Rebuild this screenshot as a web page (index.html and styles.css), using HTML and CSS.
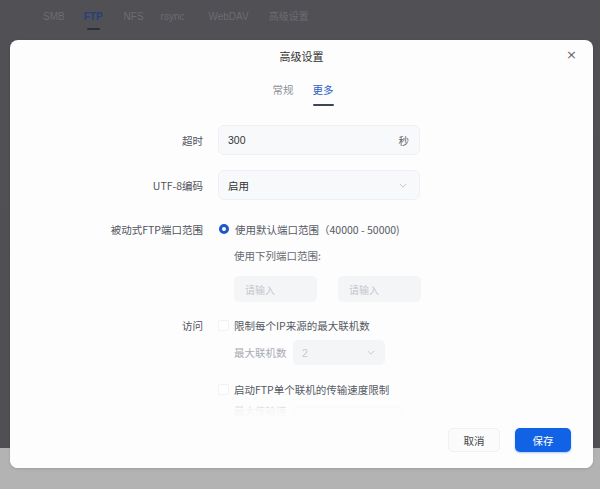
FILE: index.html
```html
<!DOCTYPE html>
<html lang="zh-CN">
<head>
<meta charset="utf-8">
<title>高级设置</title>
<link rel="stylesheet" href="styles.css">
</head>
<body>
<div class="page">
  <nav class="topnav">
    <span class="nav-item n1">SMB</span>
    <span class="nav-item n2 active">FTP</span>
    <span class="nav-item n3">NFS</span>
    <span class="nav-item n4">rsync</span>
    <span class="nav-item n5">WebDAV</span>
    <span class="nav-item n6">高级设置</span>
  </nav>
</div>

<div class="modal">
  <div class="modal-header">
    <span class="modal-title">高级设置</span>
    <span class="close">×</span>
  </div>
  <div class="tabs">
    <span class="tab">常规</span>
    <span class="tab active">更多</span>
  </div>

  <div class="modal-body">
    <div class="row row-input">
      <label class="label">超时</label>
      <div class="field">
        <span class="value">300</span>
        <span class="suffix">秒</span>
      </div>
    </div>

    <div class="row row-select">
      <label class="label">UTF-8编码</label>
      <div class="field">
        <span class="value">启用</span>
        <svg class="chev" viewBox="0 0 10 6" width="8" height="5"><path d="M1 1l4 4 4-4" fill="none" stroke="#b8bcc4" stroke-width="1.1"/></svg>
      </div>
    </div>

    <div class="row row-radio">
      <label class="label">被动式FTP端口范围</label>
      <div class="radio-line">
        <span class="radio"></span>
        <span class="text">使用默认端口范围（40000 - 50000)</span>
      </div>
    </div>

    <div class="sub-line sub-text">使用下列端口范围:</div>

    <div class="port-row">
      <div class="port">请输入</div>
      <div class="port">请输入</div>
    </div>

    <div class="row row-check">
      <label class="label">访问</label>
      <div class="check-line">
        <span class="checkbox"></span>
        <span class="text">限制每个IP来源的最大联机数</span>
      </div>
    </div>

    <div class="limit-row">
      <span class="limit-label">最大联机数</span>
      <div class="limit-select">
        <span>2</span>
        <svg class="chev" viewBox="0 0 10 6" width="8" height="5"><path d="M1 1l4 4 4-4" fill="none" stroke="#c4c7cc" stroke-width="1.1"/></svg>
      </div>
    </div>

    <div class="row row-check2">
      <span class="label"></span>
      <div class="check-line">
        <span class="checkbox"></span>
        <span class="text">启动FTP单个联机的传输速度限制</span>
      </div>
    </div>

    <div class="limit-row faded">
      <span class="limit-label">最大传输速度</span>
      <div class="limit-select wide">
        <span></span>
      </div>
    </div>
  </div>

  <div class="modal-footer">
    <button class="btn btn-cancel">取消</button>
    <button class="btn btn-save">保存</button>
  </div>
</div>
</body>
</html>
```

FILE: styles.css
```css
* { box-sizing: border-box; }

html, body {
  margin: 0;
  padding: 0;
  width: 600px;
  height: 489px;
  overflow: hidden;
}

body {
  font-family: "Noto Sans CJK SC", "Noto Sans", sans-serif;
  background: linear-gradient(to bottom, #505055 0, #4f4f54 448px, #b3b3b4 448px, #b3b3b4 100%);
  position: relative;
}

.page { height: 489px; }

.topnav {
  display: flex;
  align-items: flex-start;
  height: 40px;
  padding: 10px 0 0 43px;
}

.nav-item {
  font-size: 10px;
  color: #6c6c72;
  line-height: 14px;
  padding-bottom: 6px;
  position: relative;
  font-family: "Liberation Sans", "Noto Sans CJK SC", sans-serif;
}
.n1 { margin-right: 19px; }
.n2 { margin-right: 21px; }
.n3 { margin-right: 17px; }
.n4 { margin-right: 24px; }
.n5 { margin-right: 20px; }
.nav-item.active {
  color: #24417a;
  font-weight: bold;
}
.nav-item.active::after {
  content: "";
  position: absolute;
  left: 3px;
  right: 3px;
  bottom: 0;
  height: 2px;
  background: #2b2f3a;
  border-radius: 1px;
}

.modal {
  position: absolute;
  left: 10px;
  top: 40px;
  width: 583px;
  height: 428px;
  background: #fdfdfe;
  border-radius: 8px;
  overflow: hidden;
  box-shadow: 0 1px 3px rgba(0,0,0,0.12);
}

.modal-header {
  height: 32px;
  display: flex;
  align-items: center;
  justify-content: center;
  position: relative;
}
.modal-title {
  font-size: 11px;
  color: #333;
}
.close {
  position: absolute;
  right: 16px;
  top: 8px;
  font-size: 13px;
  color: #666;
  line-height: 14px;
  font-family: "DejaVu Sans", sans-serif;
}

.tabs {
  display: flex;
  justify-content: center;
  gap: 19px;
  padding-left: 3px;
  height: 44px;
  padding-top: 11px;
}
.tab {
  font-size: 10.5px;
  color: #8c9098;
  line-height: 14px;
  height: 23px;
  position: relative;
}
.tab.active { color: #2d63c6; }
.tab.active::after {
  content: "";
  position: absolute;
  left: 0;
  right: 0;
  bottom: 0;
  height: 2px;
  background: #3c4656;
  border-radius: 1px;
}

.modal-body {
  padding-top: 9px;
  font-size: 10.5px;
  color: #444;
}

.row {
  display: flex;
  align-items: center;
}
.label {
  width: 193px;
  text-align: right;
  color: #50545c;
  font-size: 10.5px;
  flex: none;
}

.field {
  margin-left: 15px;
  width: 202px;
  height: 30px;
  background: #f8f9fb;
  border: 1px solid #eef0f3;
  border-radius: 6px;
  display: flex;
  align-items: center;
  justify-content: space-between;
  padding: 0 10px 0 9px;
}
.value { color: #333; font-size: 10.5px; font-family: "Liberation Sans", "Noto Sans CJK SC", sans-serif; }
.suffix { color: #666; font-size: 10.5px; }
.chev { display: block; margin-right: 2px; }

.row-select { margin-top: 15px; }

.row-radio { margin-top: 21px; height: 16px; }
.radio-line, .check-line {
  margin-left: 16px;
  display: flex;
  align-items: center;
}
.radio {
  width: 10px;
  height: 10px;
  border-radius: 50%;
  border: 3px solid #1c58c8;
  background: #fff;
  margin-right: 6px;
}
.text { color: #555a63; }

.sub-line {
  margin-left: 224px;
  margin-top: 11px;
  color: #666a72;
  height: 16px;
  line-height: 16px;
}

.port-row {
  display: flex;
  gap: 21px;
  margin-left: 224px;
  margin-top: 12px;
}
.port {
  width: 83px;
  height: 26px;
  background: #f4f5f7;
  border-radius: 5px;
  color: #c3c6cb;
  font-size: 10px;
  display: flex;
  align-items: center;
  padding-left: 11px;
}

.row-check { margin-top: 15px; height: 16px; }
.checkbox {
  width: 11px;
  height: 11px;
  border: 1px solid #f1f2f4;
  border-radius: 2px;
  margin-right: 5px;
  background: #fff;
}
.check-line { margin-left: 15px; }

.limit-row {
  display: flex;
  align-items: center;
  margin-left: 224px;
  margin-top: 7px;
}
.limit-label { color: #a9acb2; width: 59px; }
.limit-select {
  width: 92px;
  height: 25px;
  background: #f4f5f7;
  border-radius: 5px;
  display: flex;
  align-items: center;
  justify-content: space-between;
  padding: 0 8px 0 9px;
  color: #c8cbcf;
  font-family: "Liberation Sans", sans-serif;
}

.row-check2 { margin-top: 16px; height: 16px; }

.limit-row.faded { margin-top: 6px; opacity: 0.35; }
.limit-select.wide { width: 110px; }

.modal-footer {
  position: absolute;
  left: 0;
  right: 0;
  bottom: 0;
  height: 60px;
  background: linear-gradient(to bottom, rgba(253,253,254,0.6) 0, #fdfdfe 14px);
  display: flex;
  justify-content: flex-end;
  align-items: flex-start;
  padding: 20px 22px 0 0;
  gap: 15px;
}
.btn {
  height: 24px;
  border-radius: 5px;
  font-family: "Noto Sans CJK SC", sans-serif;
  font-size: 10.5px;
  border: none;
  padding: 0;
}
.btn-cancel {
  width: 52px;
  background: #fbfbfc;
  border: 1px solid #f0f1f3;
  color: #444;
}
.btn-save {
  width: 56px;
  background: #1262e6;
  color: #fff;
  box-shadow: 0 1px 2px rgba(18,98,230,0.35);
}
```
